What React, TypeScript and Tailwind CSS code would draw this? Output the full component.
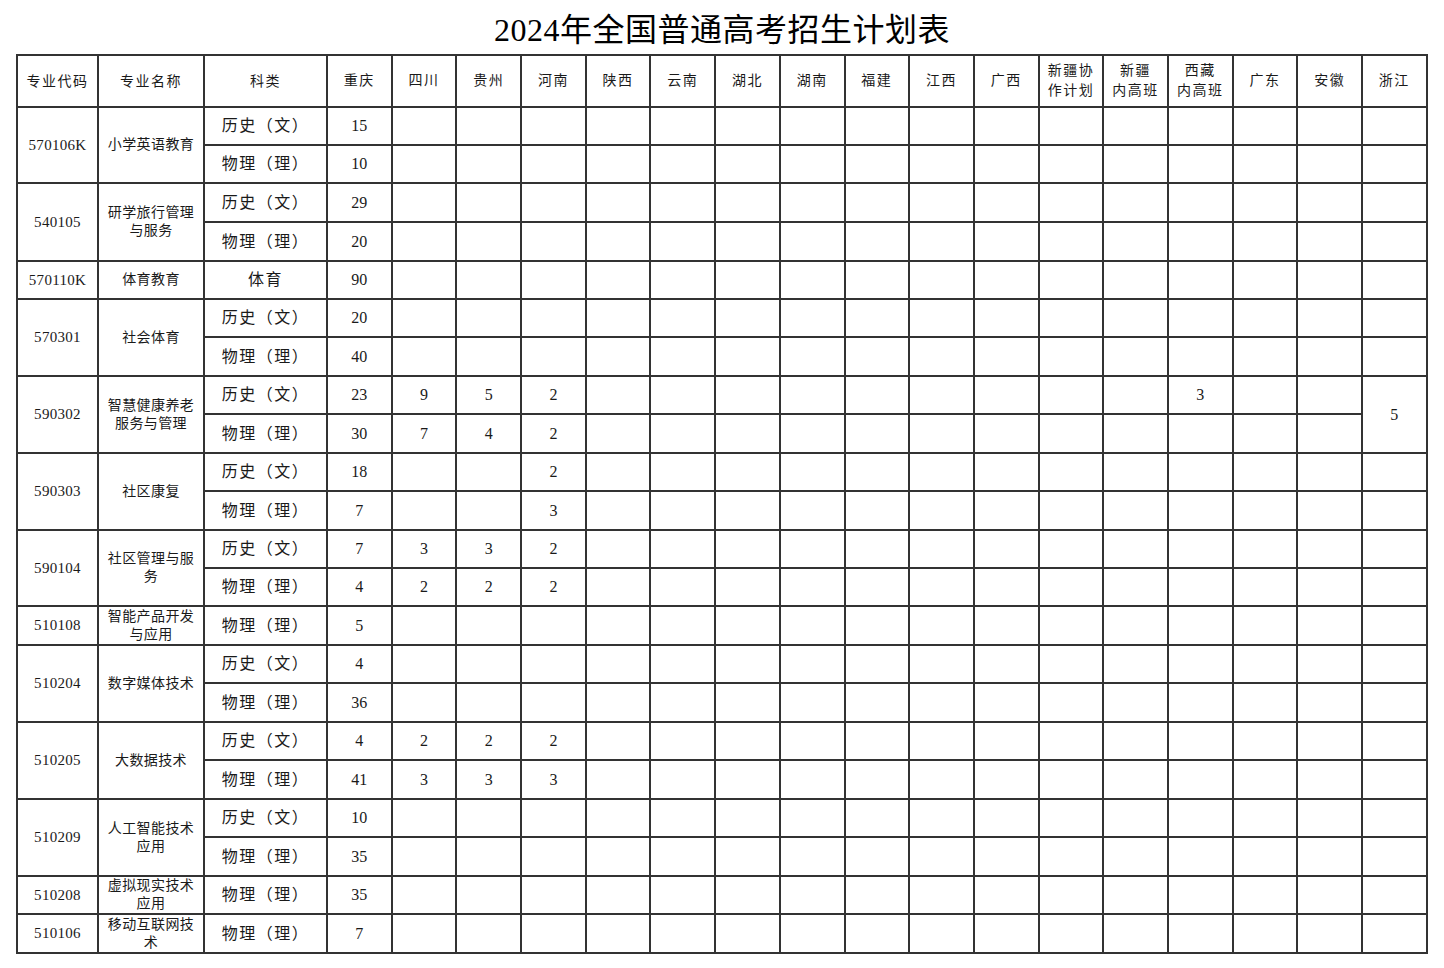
import React from "react";

type Row = {
  code?: string;
  name?: React.ReactNode;
  span?: number;
  cat: string;
  vals: (string | null)[];
  h: number;
  zjSpan?: number;
};

const provinces: React.ReactNode[] = [
  "重庆",
  "四川",
  "贵州",
  "河南",
  "陕西",
  "云南",
  "湖北",
  "湖南",
  "福建",
  "江西",
  "广西",
  <>新疆协<br />作计划</>,
  <>新疆<br />内高班</>,
  <>西藏<br />内高班</>,
  "广东",
  "安徽",
  "浙江",
];

const H = "历史（文）";
const W = "物理（理）";

function v(...xs: string[]): string[] {
  const a = Array(17).fill("");
  xs.forEach((x, i) => (a[i] = x));
  return a;
}

const heights = [38, 38, 39, 39, 38, 38, 39, 38, 39, 38, 39, 38, 38, 39, 38, 39, 38, 39, 38, 39, 38, 39];

const n2 = (a: string, b?: string) => (
  <>
    <span className="whitespace-nowrap">{a}</span>
    {b && (
      <>
        <br />
        <span className="whitespace-nowrap">{b}</span>
      </>
    )}
  </>
);

const rowsBase: Omit<Row, "h">[] = [
  { code: "570106K", name: n2("小学英语教育"), span: 2, cat: H, vals: v("15") },
  { cat: W, vals: v("10") },
  { code: "540105", name: n2("研学旅行管理", "与服务"), span: 2, cat: H, vals: v("29") },
  { cat: W, vals: v("20") },
  { code: "570110K", name: n2("体育教育"), span: 1, cat: "体育", vals: v("90") },
  { code: "570301", name: n2("社会体育"), span: 2, cat: H, vals: v("20") },
  { cat: W, vals: v("40") },
  {
    code: "590302",
    name: n2("智慧健康养老", "服务与管理"),
    span: 2,
    cat: H,
    vals: (() => {
      const a = v("23", "9", "5", "2");
      a[13] = "3";
      a[16] = "5";
      return a;
    })(),
    zjSpan: 2,
  },
  {
    cat: W,
    vals: (() => {
      const a: (string | null)[] = v("30", "7", "4", "2");
      a[16] = null;
      return a;
    })(),
  },
  { code: "590303", name: n2("社区康复"), span: 2, cat: H, vals: v("18", "", "", "2") },
  { cat: W, vals: v("7", "", "", "3") },
  { code: "590104", name: n2("社区管理与服", "务"), span: 2, cat: H, vals: v("7", "3", "3", "2") },
  { cat: W, vals: v("4", "2", "2", "2") },
  { code: "510108", name: n2("智能产品开发", "与应用"), span: 1, cat: W, vals: v("5") },
  { code: "510204", name: n2("数字媒体技术"), span: 2, cat: H, vals: v("4") },
  { cat: W, vals: v("36") },
  { code: "510205", name: n2("大数据技术"), span: 2, cat: H, vals: v("4", "2", "2", "2") },
  { cat: W, vals: v("41", "3", "3", "3") },
  { code: "510209", name: n2("人工智能技术", "应用"), span: 2, cat: H, vals: v("10") },
  { cat: W, vals: v("35") },
  { code: "510208", name: n2("虚拟现实技术", "应用"), span: 1, cat: W, vals: v("35") },
  { code: "510106", name: n2("移动互联网技", "术"), span: 1, cat: W, vals: v("7") },
];

const rows: Row[] = rowsBase.map((r, i) => ({ ...r, h: heights[i] }));

const cell = "border-2 border-[#333] p-0 text-center align-middle";

export default function App() {
  return (
    <div
      className="w-[1444px] h-[968px] bg-white text-[#1a1a1a] overflow-hidden"
      style={{ fontFamily: '"Liberation Serif", "Noto Sans CJK SC", serif' }}
    >
      <div className="h-[54px] flex items-center justify-center pt-[6px]">
        <h1 className="text-[32px] leading-none font-normal text-black tracking-[0.5px]">
          2024年全国普通高考招生计划表
        </h1>
      </div>
      <table className="ml-[16px] w-[1410px] table-fixed border-collapse">
        <colgroup>
          <col className="w-[81px]" />
          <col className="w-[106px]" />
          <col className="w-[123px]" />
          {provinces.map((_, i) => (
            <col key={i} className="w-[64.7px]" />
          ))}
        </colgroup>
        <thead>
          <tr className="h-[52px]">
            <th className={`${cell} font-normal text-[14px] tracking-[1.5px]`}>专业代码</th>
            <th className={`${cell} font-normal text-[14px] tracking-[1.5px]`}>专业名称</th>
            <th className={`${cell} font-normal text-[14px] tracking-[1.5px]`}>科类</th>
            {provinces.map((p, i) => (
              <th
                key={i}
                className={`${cell} font-normal text-[14px] leading-[20px] tracking-[1.5px]`}
              >
                {p}
              </th>
            ))}
          </tr>
        </thead>
        <tbody>
          {rows.map((r, i) => (
            <tr key={i} style={{ height: r.h }}>
              {r.code && (
                <td rowSpan={r.span} className={`${cell} text-[15px] tracking-[0.3px]`}>
                  {r.code}
                </td>
              )}
              {r.code && (
                <td rowSpan={r.span} className={`${cell} text-[14px] leading-[18px] tracking-[0.4px]`}>
                  {r.name}
                </td>
              )}
              <td className={`${cell} text-[16px] tracking-[1.5px] whitespace-nowrap`}>{r.cat}</td>
              {r.vals.map((x, j) =>
                x === null ? null : (
                  <td
                    key={j}
                    rowSpan={j === 16 && r.zjSpan ? r.zjSpan : undefined}
                    className={`${cell} text-[16px]`}
                  >
                    {x}
                  </td>
                )
              )}
            </tr>
          ))}
        </tbody>
      </table>
    </div>
  );
}
